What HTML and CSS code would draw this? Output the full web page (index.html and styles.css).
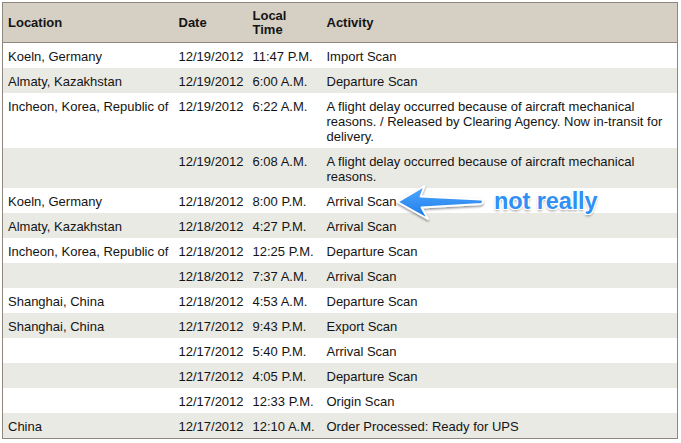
FILE: index.html
```html
<!DOCTYPE html>
<html>
<head>
<meta charset="utf-8">
<link rel="stylesheet" href="styles.css">
</head>
<body>
<div class="page">
<table class="track">
  <colgroup>
    <col class="c-loc"><col class="c-date"><col class="c-time"><col class="c-act">
  </colgroup>
  <thead>
    <tr><th>Location</th><th>Date</th><th>Local<br>Time</th><th>Activity</th></tr>
  </thead>
  <tbody>
    <tr><td>Koeln, Germany</td><td>12/19/2012</td><td>11:47 P.M.</td><td>Import Scan</td></tr>
    <tr class="alt"><td>Almaty, Kazakhstan</td><td>12/19/2012</td><td>6:00 A.M.</td><td>Departure Scan</td></tr>
    <tr><td>Incheon, Korea, Republic of</td><td>12/19/2012</td><td>6:22 A.M.</td><td>A flight delay occurred because of aircraft mechanical reasons. / Released by Clearing Agency. Now in-transit for delivery.</td></tr>
    <tr class="alt"><td></td><td>12/19/2012</td><td>6:08 A.M.</td><td>A flight delay occurred because of aircraft mechanical reasons.</td></tr>
    <tr><td>Koeln, Germany</td><td>12/18/2012</td><td>8:00 P.M.</td><td>Arrival Scan</td></tr>
    <tr class="alt"><td>Almaty, Kazakhstan</td><td>12/18/2012</td><td>4:27 P.M.</td><td>Arrival Scan</td></tr>
    <tr><td>Incheon, Korea, Republic of</td><td>12/18/2012</td><td>12:25 P.M.</td><td>Departure Scan</td></tr>
    <tr class="alt"><td></td><td>12/18/2012</td><td>7:37 A.M.</td><td>Arrival Scan</td></tr>
    <tr><td>Shanghai, China</td><td>12/18/2012</td><td>4:53 A.M.</td><td>Departure Scan</td></tr>
    <tr class="alt"><td>Shanghai, China</td><td>12/17/2012</td><td>9:43 P.M.</td><td>Export Scan</td></tr>
    <tr><td></td><td>12/17/2012</td><td>5:40 P.M.</td><td>Arrival Scan</td></tr>
    <tr class="alt"><td></td><td>12/17/2012</td><td>4:05 P.M.</td><td>Departure Scan</td></tr>
    <tr><td></td><td>12/17/2012</td><td>12:33 P.M.</td><td>Origin Scan</td></tr>
    <tr class="alt"><td>China</td><td>12/17/2012</td><td>12:10 A.M.</td><td>Order Processed: Ready for UPS</td></tr>
  </tbody>
</table>

<div class="note">
  <svg class="arrow" width="102" height="46" viewBox="385 179 102 46">
    <defs>
      <linearGradient id="ag" x1="0" y1="0" x2="0" y2="1">
        <stop offset="0" stop-color="#4fa9ff"/>
        <stop offset="1" stop-color="#1c79e8"/>
      </linearGradient>
      <filter id="sh" x="-20%" y="-40%" width="140%" height="180%">
        <feDropShadow dx="0" dy="1.5" stdDeviation="1.2" flood-color="#000" flood-opacity="0.45"/>
      </filter>
    </defs>
    <path d="M397.5 202 L424.5 186 L420.5 196.5 L481 199.5 Q485 201.5 481 204 L421.5 207.5 L428 219 Z"
          fill="url(#ag)" stroke="#fff" stroke-width="1.8" stroke-linejoin="round" filter="url(#sh)"/>
  </svg>
  <span class="label">not really</span>
</div>
</div>
</body>
</html>
```

FILE: styles.css
```css
html, body {
  margin: 0;
  padding: 0;
  background: #ffffff;
}

.page {
  position: relative;
  width: 681px;
  height: 443px;
  padding: 2px 0 0 2px;
  box-sizing: border-box;
}

.track {
  width: 676px;
  border-collapse: collapse;
  table-layout: fixed;
  border: 1px solid #8d877d;
  font-family: "Liberation Sans", Arial, Helvetica, sans-serif;
  font-size: 13px;
  line-height: 15px;
  color: #141414;
}

.c-loc { width: 171px; }
.c-date { width: 74px; }
.c-time { width: 74px; }
.c-act { width: auto; }

.track th {
  background: #d6cfc3;
  text-align: left;
  font-weight: bold;
  vertical-align: middle;
  height: 40px;
  padding: 0 5px;
  line-height: 14px;
  border-bottom: 1px solid #8d877d;
  box-sizing: border-box;
}

.track td {
  vertical-align: top;
  padding: 6px 10px 4px 5px;
  white-space: normal;
}

.track td:first-child,
.track td:nth-child(2),
.track td:nth-child(3) {
  white-space: nowrap;
  padding-right: 0;
}

.track tr.alt td {
  background: #eaeae5;
}

.note {
  position: absolute;
  left: 385px;
  top: 179px;
  display: flex;
  align-items: center;
}

.arrow {
  display: block;
}

.label {
  margin-left: 7px;
  margin-top: -2px;
  font-family: "Liberation Sans", Arial, Helvetica, sans-serif;
  font-weight: bold;
  font-size: 23.5px;
  letter-spacing: -0.1px;
  color: #2f90f5;
  text-shadow:
    1px 0 0 #fff, -1px 0 0 #fff, 0 1px 0 #fff, 0 -1px 0 #fff,
    1px 1px 0 #fff, -1px -1px 0 #fff, 1px -1px 0 #fff, -1px 1px 0 #fff,
    0 2px 3px rgba(0,0,0,0.45);
}
```
